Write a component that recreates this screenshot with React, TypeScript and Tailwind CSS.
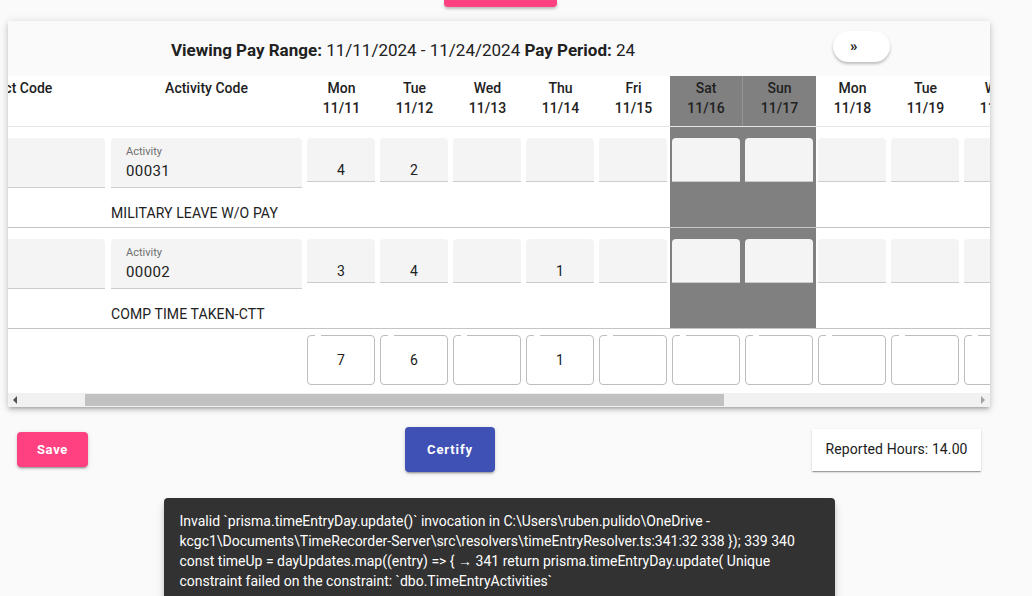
import React from "react";

const days: [string, string][] = [
  ["Mon", "11/11"], ["Tue", "11/12"], ["Wed", "11/13"], ["Thu", "11/14"], ["Fri", "11/15"],
  ["Sat", "11/16"], ["Sun", "11/17"], ["Mon", "11/18"], ["Tue", "11/19"], ["Wed", "11/20"],
  ["Thu", "11/21"], ["Fri", "11/22"], ["Sat", "11/23"], ["Sun", "11/24"],
];
const weekend = (i: number) => i === 5 || i === 6 || i === 12 || i === 13;

const rows = [
  { code: "00031", desc: "MILITARY LEAVE W/O PAY", vals: ["4", "2", "", "", "", "", "", "", "", "", "", "", "", ""] },
  { code: "00002", desc: "COMP TIME TAKEN-CTT", vals: ["3", "4", "", "1", "", "", "", "", "", "", "", "", "", ""] },
];
const totals = ["7", "6", "", "1", "", "", "", "", "", "", "", "", "", ""];

const errLines = [
  "Invalid `prisma.timeEntryDay.update()` invocation in C:\\Users\\ruben.pulido\\OneDrive -",
  "kcgc1\\Documents\\TimeRecorder-Server\\src\\resolvers\\timeEntryResolver.ts:341:32 338 }); 339 340",
  "const timeUp = dayUpdates.map((entry) => { \u2192 341 return prisma.timeEntryDay.update( Unique",
  "constraint failed on the constraint: `dbo.TimeEntryActivities`",
];

function FilledBox({ children, className = "" }: { children?: React.ReactNode; className?: string }) {
  return (
    <div className={"bg-[#f4f4f4] rounded-t-[4px] border-b border-[#cccccc] " + className}>{children}</div>
  );
}

export default function App() {
  return (
    <div className="min-h-[596px] h-[596px] overflow-hidden bg-[#fafafa] font-['Roboto',sans-serif] text-[#212121]">
      <div className="ml-[8px] w-[982px]">
        <div className="flex justify-center pl-[2px]">
          <div className="w-[113px] h-[7px] bg-[#ff4081] rounded-b-[4px] shadow-[0_2px_3px_rgba(0,0,0,0.25)]" />
        </div>

        {/* Card */}
        <div className="mt-[14px] bg-[#fafafa] shadow-[0_3px_3px_-2px_rgba(0,0,0,0.2),0_3px_5px_0_rgba(0,0,0,0.14),0_1px_9px_0_rgba(0,0,0,0.12)]">
          <div className="h-[55px] flex items-center">
            <div className="w-[790px] text-center text-[17px] pt-[4px]">
              <span className="font-bold">Viewing Pay Range:</span> 11/11/2024 - 11/24/2024{" "}
              <span className="font-bold">Pay Period:</span> 24
            </div>
            <div className="ml-[35px] mt-[-5px] w-[57px] h-[31px] rounded-full bg-white shadow-[0_2px_3px_rgba(0,0,0,0.25)] flex items-center pl-[17px] text-[15px] font-bold leading-none">
              »
            </div>
          </div>

          <div className="overflow-hidden bg-white">
            <div className="w-[1416px] ml-[-97px]">
              {/* header */}
              <div className="flex h-[51px] border-b border-[#e6e6e6] text-[14px] font-medium leading-[20px]">
                <div className="w-[197px] shrink-0 text-center pt-[2px] pl-[5px]">Project Code</div>
                <div className="w-[197px] shrink-0 text-center pt-[2px]">Activity Code</div>
                {days.map(([d, dt], i) => (
                  <div
                    key={i}
                    className={
                      "w-[73px] shrink-0 text-center pt-[2px] " +
                      (weekend(i) ? "bg-[#808080] " : "") +
                      (i === 5 ? "border-r border-[#959595]" : "")
                    }
                  >
                    <div>{d}</div>
                    <div>{dt}</div>
                  </div>
                ))}
              </div>

              {/* rows */}
              {rows.map((r, ri) => (
                <div key={ri} className="flex h-[101px] border-b border-[#c4c4c4]">
                  <div className="w-[197px] shrink-0 pt-[11px] px-[3px]">
                    <FilledBox className="h-[50px]" />
                  </div>
                  <div className="w-[197px] shrink-0 pt-[11px] px-[3px]">
                    <FilledBox className="h-[50px] pl-[15px] pt-[7px]">
                      <div className="text-[11px] leading-[14px] text-[#6f6f6f]">Activity</div>
                      <div className="text-[15px] leading-[20px] mt-[2px] tracking-[0.4px]">{r.code}</div>
                    </FilledBox>
                    <div className="mt-[15px] text-[14px] leading-[20px] tracking-[0.1px]">{r.desc}</div>
                  </div>
                  {r.vals.map((v, i) => (
                    <div
                      key={i}
                      className={
                        "w-[73px] shrink-0 pt-[11px] pl-[2px] pr-[3px] " +
                        (weekend(i) ? "bg-[#808080]" : "")
                      }
                    >
                      <FilledBox className="h-[44px] text-center text-[14px] leading-[20px] pt-[22px]">{v}</FilledBox>
                    </div>
                  ))}
                </div>
              ))}

              {/* totals */}
              <div className="flex h-[64px]">
                <div className="w-[197px] shrink-0" />
                <div className="w-[197px] shrink-0" />
                {totals.map((v, i) => (
                  <div key={i} className="w-[73px] shrink-0 pt-[6px] pl-[2px] pr-[3px]">
                    <div className="relative h-[50px] rounded-[4px] border border-[#bdbdbd] bg-white flex items-center justify-center text-[14px]">
                      {v}
                      <span className="absolute top-[-1px] left-[7px] w-[6px] h-[1px] bg-white" />
                    </div>
                  </div>
                ))}
              </div>
            </div>
            {/* scrollbar */}
            <div className="h-[14px] bg-[#f1f1f1] flex items-center">
              <div className="w-[14px] flex justify-center">
                <div className="w-0 h-0 border-y-[4px] border-y-transparent border-r-[4px] border-r-[#505050]" />
              </div>
              <div className="ml-[63px] w-[639px] h-[12px] bg-[#c1c1c1]" />
              <div className="ml-auto w-[14px] flex justify-center">
                <div className="w-0 h-0 border-y-[4px] border-y-transparent border-l-[4px] border-l-[#a3a3a3]" />
              </div>
            </div>
          </div>
        </div>

        {/* actions */}
        <div className="mt-[20px] ml-[9px] w-[964px] flex justify-between items-center">
          <div className="w-[71px] h-[35px] rounded-[4px] bg-[#ff4081] text-white font-bold text-[13px] tracking-[0.7px] flex items-center justify-center shadow-[0_3px_1px_-2px_rgba(0,0,0,0.2),0_2px_2px_0_rgba(0,0,0,0.14),0_1px_5px_0_rgba(0,0,0,0.12)]">
            Save
          </div>
          <div className="w-[90px] h-[45px] rounded-[4px] bg-[#3f51b5] text-white font-bold text-[13px] tracking-[0.9px] flex items-center justify-center shadow-[0_3px_1px_-2px_rgba(0,0,0,0.2),0_2px_2px_0_rgba(0,0,0,0.14),0_1px_5px_0_rgba(0,0,0,0.12)]">
            Certify
          </div>
          <div className="w-[169px] h-[42px] bg-white flex items-center justify-center text-[14px] tracking-[0.1px] shadow-[0_2px_1px_-1px_rgba(0,0,0,0.2),0_1px_1px_0_rgba(0,0,0,0.14),0_1px_3px_0_rgba(0,0,0,0.12)]">
            Reported Hours: 14.00
          </div>
        </div>

        {/* snackbar */}
        <div className="mt-[26px] mx-auto w-[671px] h-[120px] bg-[#323232] rounded-[4px] px-[16px] pt-[13px] text-white text-[14px] leading-[20px] shadow-[0_3px_5px_-1px_rgba(0,0,0,0.2),0_6px_10px_0_rgba(0,0,0,0.14)]">
          {errLines.map((l, i) => (
            <div key={i} className="whitespace-nowrap">{l}</div>
          ))}
        </div>
      </div>
    </div>
  );
}
